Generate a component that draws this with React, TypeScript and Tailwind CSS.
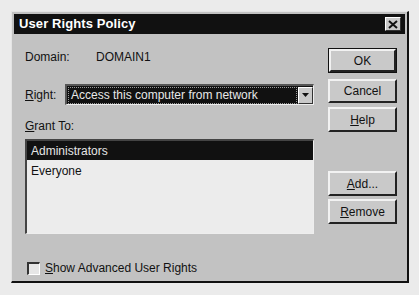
import React from "react";

const font = { fontFamily: '"Liberation Sans", Arial, sans-serif' };

function Btn({ children, className = "", def = false }: { children: React.ReactNode; className?: string; def?: boolean }) {
  return (
    <div
      className={`w-[69px] ${def ? "border border-[#111]" : ""} ${className}`}
    >
      <div className="h-full border-t-2 border-l-2 border-t-[#f2f2f2] border-l-[#f2f2f2] border-b-2 border-r-2 border-b-[#222] border-r-[#222] bg-[#c9c9c9] flex items-center justify-center text-[12px] text-[#111]">
        {children}
      </div>
    </div>
  );
}

export default function App() {
  return (
    <div className="w-[419px] h-[295px] bg-[#ebebeb] pt-[11px] pl-[11px]" style={font}>
      <div className="w-[398px] h-[272px] bg-[#c2c2c2] border-t border-l border-t-[#e4e4e4] border-l-[#e4e4e4] border-b-2 border-r-2 border-b-[#111] border-r-[#111] p-[2px] flex flex-col">
        <div className="h-[20px] bg-[#111] flex items-center justify-between pl-[5px] pr-[4px] shrink-0">
          <span className="text-white font-bold text-[13px] tracking-[0.1px]">User Rights Policy</span>
          <div className="w-[16px] h-[14px] bg-[#c9c9c9] border-t border-l border-white border-b border-r border-b-[#333] border-r-[#333] flex items-center justify-center">
            <svg width="10" height="9" viewBox="0 0 10 9">
              <path d="M1 1 L9 8 M9 1 L1 8" stroke="#111" strokeWidth="2" />
            </svg>
          </div>
        </div>
        <div className="flex flex-1">
          <div className="w-[301px] pl-[11px] flex flex-col text-[12px] text-[#111]">
            <div className="mt-[15px] h-[16px] flex items-center">
              <span className="w-[71px]">Domain:</span>
              <span>DOMAIN1</span>
            </div>
            <div className="mt-[19px] flex items-center">
              <span className="w-[40px]">
                <u>R</u>ight:
              </span>
              <div className="w-[249px] h-[21px] border-t-2 border-l-2 border-t-[#555] border-l-[#555] border-b border-r border-b-[#eee] border-r-[#eee] bg-[#111] flex items-center">
                <span className="flex-1 pl-[2px] text-[#e8e8e8] border border-dotted border-[#999] mx-[1px] leading-[15px]">Access this computer from network</span>
                <div className="w-[15px] h-[17px] bg-[#c9c9c9] border-t border-l border-t-white border-l-white border-b border-r border-b-[#333] border-r-[#333] flex items-center justify-center">
                  <svg width="7" height="4" viewBox="0 0 7 4"><path d="M0 0 H7 L3.5 4 Z" fill="#111" /></svg>
                </div>
              </div>
            </div>
            <div className="mt-[13px] h-[16px] flex items-center">
              <span>
                <u>G</u>rant To:
              </span>
            </div>
            <div className="mt-[5px] w-[289px] h-[95px] border-t-2 border-l-2 border-t-[#444] border-l-[#444] border-b border-r border-b-[#eee] border-r-[#eee] bg-[#ececec] flex flex-col">
              <div className="h-[19px] bg-[#111] text-[#e6e6e6] pl-[4px] flex items-center">Administrators</div>
              <div className="h-[22px] pl-[4px] flex items-center">Everyone</div>
            </div>
            <div className="mt-[25px] flex items-center">
              <div className="w-[13px] h-[13px] ml-[2px] border-t-2 border-l-2 border-t-[#333] border-l-[#333] border-b border-r border-b-white border-r-white bg-[#e6e6e6]" />
              <span className="ml-[5px]">
                <u>S</u>how Advanced User Rights
              </span>
            </div>
          </div>
          <div className="ml-[13px] flex flex-col">
            <Btn def className="mt-[14px] h-[25px]">OK</Btn>
            <Btn className="mt-[6px] h-[24px]">Cancel</Btn>
            <Btn className="mt-[4px] h-[25px]">
              <span><u>H</u>elp</span>
            </Btn>
            <Btn className="mt-[39px] h-[25px]">
              <span><u>A</u>dd...</span>
            </Btn>
            <Btn className="mt-[3px] h-[25px]">
              <span><u>R</u>emove</span>
            </Btn>
          </div>
        </div>
      </div>
    </div>
  );
}
